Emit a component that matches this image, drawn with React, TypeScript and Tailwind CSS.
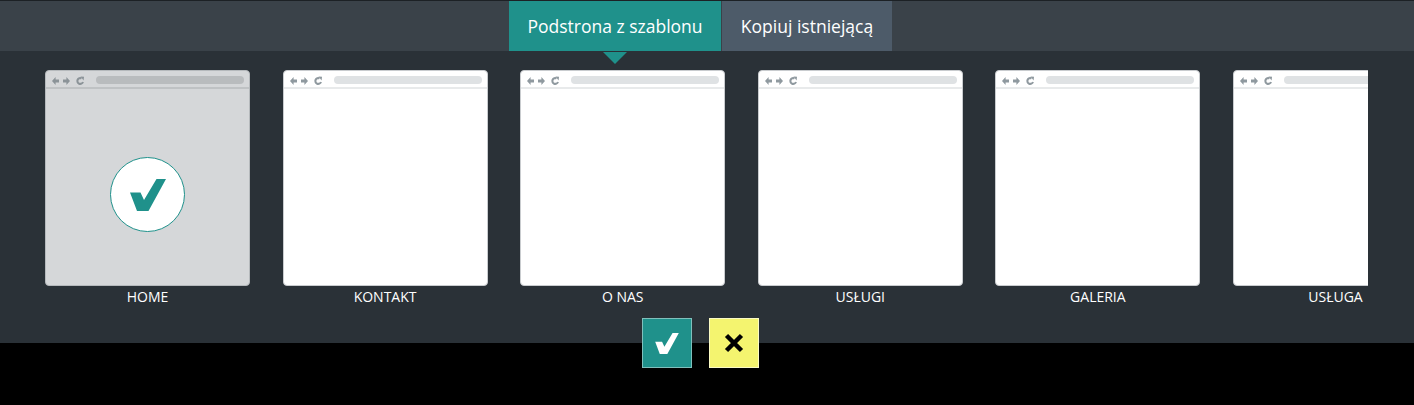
import React from 'react';

const pages = ['HOME', 'KONTAKT', 'O NAS', 'USŁUGI', 'GALERIA', 'USŁUGA'];

const CheckMark = ({ className }: { className: string }) => (
  <svg className={className} viewBox="20 20 36 32" fill="currentColor">
    <polygon points="20,33.5 30.5,33.5 34,41 46.5,20 56,20 38.5,52 27,52" />
  </svg>
);

const BrowserIcons = ({ className }: { className: string }) => (
  <svg className={className} width="32" height="10" viewBox="0 0 32 10" fill="currentColor">
    <path d="M0 5 L3.6 1 L3.6 3.5 L7 3.5 L7 6.5 L3.6 6.5 L3.6 9 Z" />
    <path d="M18 5 L14.4 1 L14.4 3.5 L11 3.5 L11 6.5 L14.4 6.5 L14.4 9 Z" />
    <path d="M29.6 2.4 A2.9 2.9 0 1 0 31 6" fill="none" stroke="currentColor" strokeWidth="2.1" />
    <path d="M28.5 0.4 L32 0.8 L31.6 4.6 Z" />
  </svg>
);

const PageCard = ({ name, selected }: { name: string; selected: boolean }) => (
  <div className="w-[205px] shrink-0">
    <div
      className={`h-[216px] rounded-[4px] border flex flex-col overflow-hidden ${
        selected ? 'bg-[#d5d7d9] border-[#b5b9bc]' : 'bg-white border-[#c9cccf]'
      }`}
    >
      <div
        className={`h-[18px] shrink-0 flex items-center pt-[2px] pl-[6px] pr-[5px] border-b-2 ${
          selected ? 'border-[#bfc2c4]' : 'border-[#e8eaeb]'
        }`}
      >
        <BrowserIcons className={`mt-[2px] ${selected ? 'text-[#8b9398]' : 'text-[#8f999f]'}`} />
        <div className={`ml-[12px] h-[8px] flex-1 rounded-full ${selected ? 'bg-[#b9bcbe]' : 'bg-[#dfe2e4]'}`} />
      </div>
      {selected && (
        <div className="flex-1 flex items-center justify-center pt-[15px]">
          <div className="w-[75px] h-[75px] rounded-full bg-white border border-[#1f918b] flex items-center justify-center">
            <CheckMark className="w-[36px] h-[32px] text-[#1f918b]" />
          </div>
        </div>
      )}
    </div>
    <div className="mt-[2px] text-center text-[14px] leading-[18px] text-white">{name}</div>
  </div>
);

export default function App() {
  return (
    <div className="min-h-screen bg-black font-['Open_Sans',sans-serif]">
      {/* Tabs */}
      <header className="h-[51px] bg-[#3a4249] border-t border-[#1c2125] flex justify-center pr-[14px]">
        <div className="relative w-[212px] pl-px bg-[#1f918b] text-white text-[17.5px] flex items-center justify-center">
          Podstrona z szablonu
          <div className="absolute left-[94px] top-[51px] border-x-[12px] border-t-[12px] border-x-transparent border-t-[#1f918b]" />
        </div>
        <div className="ml-px w-[170px] pl-px bg-[#4d5b69] text-white text-[17.5px] flex items-center justify-center">
          Kopiuj istniejącą
        </div>
      </header>

      {/* Panel */}
      <section className="h-[292px] bg-[#2a3137] pt-[19px]">
        <div className="ml-[45px] w-[1323px] flex gap-[32.6px] overflow-hidden">
          {pages.map((name, i) => (
            <PageCard key={name} name={name} selected={i === 0} />
          ))}
        </div>
        <div className="mt-[12px] flex justify-center gap-[17px] mr-[13px]">
          <button className="w-[50px] h-[50px] bg-[#1f918b] border border-[#7fc0bc] text-white flex items-center justify-center">
            <CheckMark className="w-[24px] h-[21px]" />
          </button>
          <button className="w-[50px] h-[50px] bg-[#f4f46f] border border-[#fbfbc4] text-black flex items-center justify-center">
            <svg width="20" height="20" viewBox="0 0 20 20" stroke="currentColor" strokeWidth="4.5" fill="none">
              <path d="M2.5 2.5 L17.5 17.5 M17.5 2.5 L2.5 17.5" />
            </svg>
          </button>
        </div>
      </section>
    </div>
  );
}
